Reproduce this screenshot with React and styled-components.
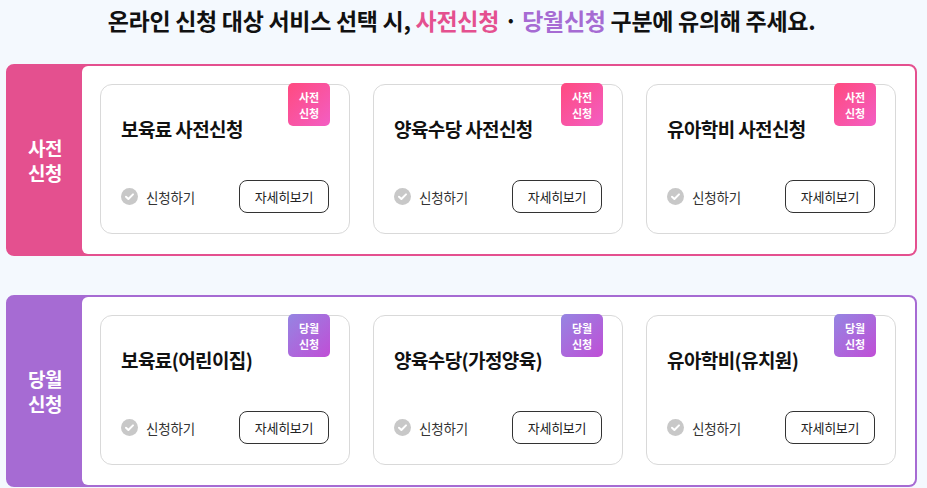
import styled, { createGlobalStyle } from 'styled-components';

const GlobalStyle = createGlobalStyle`
    body {
        margin: 0;
        background: #f4f9fe;
        font-family: "Noto Sans CJK KR", "Noto Sans", sans-serif;
    }
`;

const theme = {
    pre: {
        main: '#e4508f',
        badge: 'linear-gradient(135deg, #ff4a7f 0%, #f35ec4 100%)',
    },
    now: {
        main: '#a66bd3',
        badge: 'linear-gradient(135deg, #9585e2 0%, #c04ed6 100%)',
    },
};

const Page = styled.div`
    width: 927px;
    height: 488px;
    padding: 0 10px 0 6px;
    box-sizing: border-box;
    overflow: hidden;
`;

const Notice = styled.h2`
    margin: 0;
    padding: 6px 0 0;
    height: 64px;
    box-sizing: border-box;
    text-align: center;
    font-size: 23px;
    line-height: 28px;
    font-weight: 700;
    letter-spacing: -0.3px;
    color: #111;
`;

const Em = styled.span`
    color: ${({ $type }) => theme[$type].main};
`;

const Section = styled.section`
    display: flex;
    height: 192px;
    box-sizing: border-box;
    border: 2px solid ${({ $type }) => theme[$type].main};
    border-radius: 8px;
    background: ${({ $type }) => theme[$type].main};
    margin-bottom: 39px;
`;

const Label = styled.div`
    width: 74px;
    flex-shrink: 0;
    display: flex;
    align-items: center;
    justify-content: center;
    text-align: center;
    color: #fff;
    font-size: 19px;
    font-weight: 700;
    line-height: 25px;
    letter-spacing: -0.5px;
`;

const Panel = styled.div`
    flex: 1;
    display: grid;
    grid-template-columns: repeat(3, 250px);
    column-gap: 23px;
    padding: 18px 0 20px 18px;
    background: #fff;
    border-radius: 6px;
`;

const Card = styled.div`
    position: relative;
    display: flex;
    flex-direction: column;
    justify-content: space-between;
    padding: 33px 20px 20px;
    border: 1px solid #d9d9d9;
    border-radius: 12px;
    box-sizing: border-box;
    height: 150px;
`;

const Badge = styled.span`
    position: absolute;
    top: -2px;
    right: 19px;
    width: 42px;
    height: 43px;
    border-radius: 5px;
    background: ${({ $type }) => theme[$type].badge};
    color: #fff;
    font-size: 11px;
    font-weight: 700;
    line-height: 16px;
    display: flex;
    align-items: center;
    justify-content: center;
    text-align: center;
`;

const CardTitle = styled.h3`
    margin: 0;
    font-size: 19px;
    line-height: 22px;
    font-weight: 700;
    letter-spacing: -0.6px;
    color: #111;
`;

const Bottom = styled.div`
    display: flex;
    align-items: center;
    justify-content: space-between;
`;

const Apply = styled.span`
    display: flex;
    align-items: center;
    gap: 8px;
    font-size: 13.5px;
    color: #333;
    letter-spacing: -0.2px;
`;

const DetailButton = styled.button`
    width: 90px;
    height: 33px;
    box-sizing: border-box;
    border: 1.5px solid #333;
    border-radius: 8px;
    background: #fff;
    font-family: inherit;
    font-size: 13px;
    color: #222;
    letter-spacing: -0.3px;
    padding: 0;
    cursor: pointer;
`;

const CheckIcon = () => (
    <svg width="17" height="17" viewBox="0 0 17 17">
        <circle cx="8.5" cy="8.5" r="8.5" fill="#c8c8c8" />
        <path d="M5 8.7l2.4 2.3 4.6-4.6" fill="none" stroke="#fff" strokeWidth="2" strokeLinecap="round" strokeLinejoin="round" />
    </svg>
);

const sections = [
    {
        type: 'pre',
        label: ['사전', '신청'],
        cards: ['보육료 사전신청', '양육수당 사전신청', '유아학비 사전신청'],
    },
    {
        type: 'now',
        label: ['당월', '신청'],
        cards: ['보육료(어린이집)', '양육수당(가정양육)', '유아학비(유치원)'],
    },
];

export default function App() {
    return (
        <Page>
            <GlobalStyle />
            <Notice>
                온라인 신청 대상 서비스 선택 시, <Em $type="pre">사전신청</Em> · <Em $type="now">당월신청</Em> 구분에 유의해 주세요.
            </Notice>
            {sections.map((s) => (
                <Section key={s.type} $type={s.type}>
                    <Label>
                        {s.label[0]}<br />{s.label[1]}
                    </Label>
                    <Panel>
                        {s.cards.map((title) => (
                            <Card key={title}>
                                <Badge $type={s.type}>
                                    {s.label[0]}<br />{s.label[1]}
                                </Badge>
                                <CardTitle>{title}</CardTitle>
                                <Bottom>
                                    <Apply>
                                        <CheckIcon />
                                        신청하기
                                    </Apply>
                                    <DetailButton>자세히보기</DetailButton>
                                </Bottom>
                            </Card>
                        ))}
                    </Panel>
                </Section>
            ))}
        </Page>
    );
}
